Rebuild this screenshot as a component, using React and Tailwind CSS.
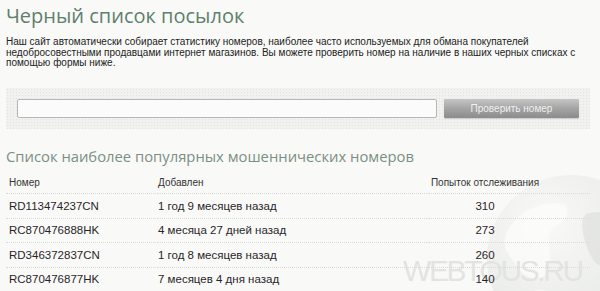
const rows = [
  { code: 'RD113474237CN', added: '1 год 9 месяцев назад', tries: 310 },
  { code: 'RC870476888HK', added: '4 месяца 27 дней назад', tries: 273 },
  { code: 'RD346372837CN', added: '1 год 8 месяцев назад', tries: 260 },
  { code: 'RC870476877HK', added: '7 месяцев 4 дня назад', tries: 140 },
];

// faint globe + site watermark in the lower right corner
function Watermark() {
  return (
    <div className="pointer-events-none absolute left-[400px] top-[170px] w-[200px] h-[121px] overflow-hidden">
      <svg className="absolute left-[86px] top-[4px]" width="170" height="170" viewBox="0 0 170 170">
        <defs>
          <radialGradient id="g" cx="0.35" cy="0.3" r="0.75">
            <stop offset="0" stopColor="#f9faf8" />
            <stop offset="1" stopColor="#e0e2df" />
          </radialGradient>
        </defs>
        <circle cx="85" cy="85" r="84" fill="url(#g)" opacity="0.8" />
        <path d="M20 60 C30 38 55 26 78 30 C88 40 76 50 66 54 C58 66 70 84 58 102 C48 110 34 100 28 88 C20 78 16 70 20 60Z" fill="#fbfcfa" opacity="0.9" />
        <path d="M40 120 C52 112 70 116 78 130 C82 146 70 160 56 158 C44 150 36 134 40 120Z" fill="#fbfcfa" opacity="0.9" />
        <path d="M100 40 C118 34 138 44 146 60 C150 76 140 90 126 94 C112 96 104 84 100 70 C96 58 94 46 100 40Z" fill="#d8dad7" opacity="0.5" />
      </svg>
      <div className="absolute left-[3px] top-[86px] text-[30px] leading-none tracking-[-2.4px] text-[#e3e4e2] font-['Liberation_Sans',sans-serif]">
        WEBTOUS.RU
      </div>
    </div>
  );
}

export default function App() {
  return (
    <div className="relative w-[600px] h-[291px] overflow-hidden bg-[#f9faf8] font-['Liberation_Sans',sans-serif] text-[#222]">
      <Watermark />
      <div className="relative px-[6px]">
        <h1 className="pt-[3px] text-[20px] leading-[26px] text-[#5f806c] font-['Open_Sans',sans-serif]">
          Черный список посылок
        </h1>
        <p className="mt-[8px] text-[10px] leading-[10.5px] text-[#222] w-[584px]">
          Наш сайт автоматически собирает статистику номеров, наиболее часто используемых для обмана покупателей недобросовестными продавцами интернет магазинов. Вы можете проверить номер на наличие в наших черных списках с помощью формы ниже.
        </p>

        <div className="mt-[19px] w-[584px] h-[41px] flex items-center gap-[7px] pl-[11px] bg-[#f1f2f0] bg-[radial-gradient(#e2e3e1_0.6px,transparent_0.7px)] bg-[length:3px_3px]">
          <input className="w-[420px] h-[19px] border border-[#b5b7b4] rounded-[2px] bg-[#fafbfa] outline-none" />
          <button className="w-[135px] h-[19px] rounded-[1px] bg-gradient-to-b from-[#c6c6c6] via-[#a4a4a4] to-[#8c8c8c] text-[10px] text-[#f0f0f0] shadow-[0_1px_1px_rgba(0,0,0,0.15)]">
            Проверить номер
          </button>
        </div>

        <h2 className="mt-[17px] text-[14.8px] leading-[20px] text-[#7a8f81] font-['Open_Sans',sans-serif]">
          Список наиболее популярных мошеннических номеров
        </h2>

        <table className="mt-[8px] w-[584px] border-collapse">
          <thead>
            <tr className="border-b border-dotted border-[#d9dad8] h-[20px] text-[10px] text-[#333]">
              <th className="w-[152px] pl-[3px] pb-[2px] text-left font-normal">Номер</th>
              <th className="pb-[2px] text-left font-normal">Добавлен</th>
              <th className="w-[161px] pb-[2px] text-left font-normal whitespace-nowrap">
                <span className="inline-block w-[112px] text-center">Попыток отслеживания</span>
              </th>
            </tr>
          </thead>
          <tbody>
            {rows.map((r) => (
              <tr key={r.code} className="border-b border-dotted border-[#d9dad8] h-[24.5px] text-[11.5px] leading-[14px] text-[#2a1f2a]">
                <td className="pl-[3px] py-0">{r.code}</td>
                <td className="py-0">{r.added}</td>
                <td className="py-0"><span className="inline-block w-[112px] text-center">{r.tries}</span></td>
              </tr>
            ))}
          </tbody>
        </table>
      </div>
    </div>
  );
}
